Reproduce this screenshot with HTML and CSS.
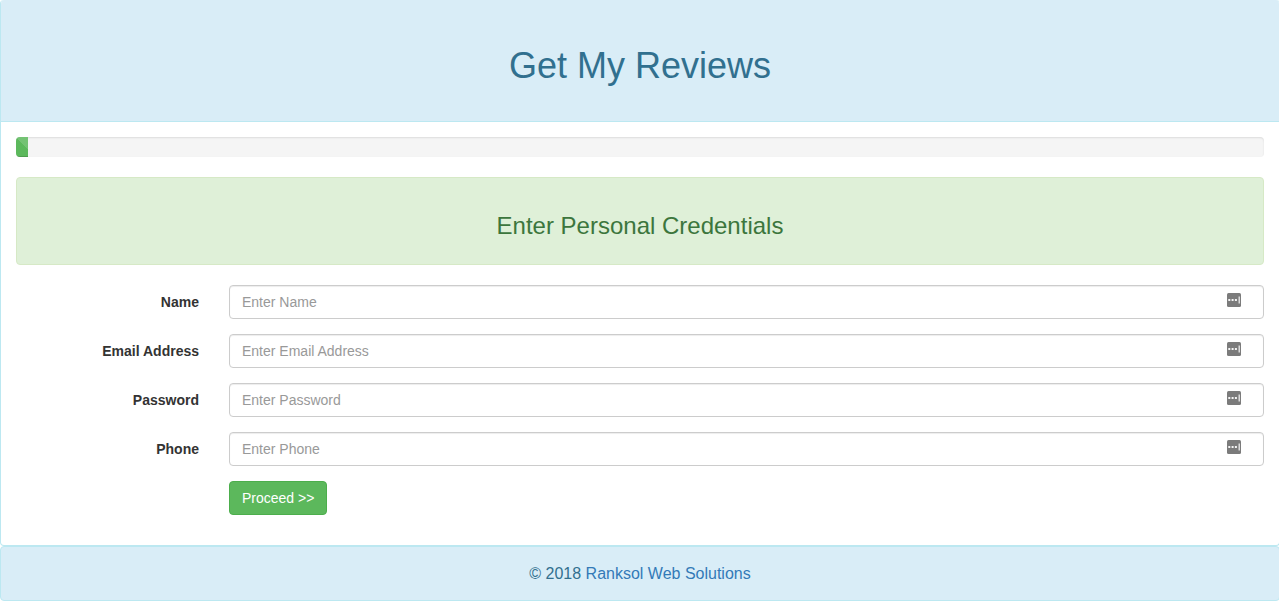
FILE: index.html
```html
<!DOCTYPE html>
<html lang="en">
<head>
<meta charset="utf-8">
<title>Get My Reviews</title>
<link rel="stylesheet" href="styles.css">
</head>
<body>
<svg class="defs" aria-hidden="true">
  <symbol id="key" viewBox="0 0 14 14">
    <rect width="14" height="14" rx="1.5" fill="#7b7b7b"/>
    <path d="M1.3 6h2v2h-2zM4.6 6h2v2h-2zM7.9 6h2v2h-2zM11.6 3.6h1.2v6.8h-1.2z" fill="#f4f4f4"/>
  </symbol>
</svg>
<div class="page">
<main class="panel">
  <header class="panel-heading"><h1>Get My Reviews</h1></header>
  <div class="panel-body">
    <div class="progress"><div class="progress-bar" style="width:1%"></div></div>
    <div class="alert"><h2>Enter Personal Credentials</h2></div>
    <form class="form">
      <label for="name">Name</label>
      <div class="field"><input id="name" type="text" placeholder="Enter Name"><svg class="key"><use href="#key"/></svg></div>
      <label for="email">Email Address</label>
      <div class="field"><input id="email" type="email" placeholder="Enter Email Address"><svg class="key"><use href="#key"/></svg></div>
      <label for="password">Password</label>
      <div class="field"><input id="password" type="password" placeholder="Enter Password"><svg class="key"><use href="#key"/></svg></div>
      <label for="phone">Phone</label>
      <div class="field"><input id="phone" type="tel" placeholder="Enter Phone"><svg class="key"><use href="#key"/></svg></div>
      <button class="btn" type="button">Proceed &gt;&gt;</button>
    </form>
  </div>
</main>
<footer class="footer">© 2018 <a href="#">Ranksol Web Solutions</a></footer>
</div>
</body>
</html>
```
FILE: styles.css
```css
* { box-sizing: border-box; }
body {
  margin: 0;
  overflow-x: hidden;
  background: #fff;
  color: #333;
  font: 14px/20px "Liberation Sans", Arial, sans-serif;
}
.defs { position: absolute; width: 0; height: 0; }
.page { margin-right: -1px; }
.panel {
  overflow: hidden;
  border: 1px solid #bce8f1;
  border-top: 0;
  border-radius: 4px;
}
.panel-heading {
  padding: 46px 15px 35px;
  border-bottom: 1px solid #bce8f1;
  background: #d9edf7;
  color: #31708f;
  text-align: center;
}
h1, h2 { margin: 0; font-weight: 500; }
h1 { font-size: 36px; line-height: 40px; }
h2 { font-size: 24px; line-height: 26px; }
.panel-body { padding: 15px 15px 30px; }
.progress {
  height: 20px;
  margin-bottom: 20px;
  overflow: hidden;
  border-radius: 4px;
  background: #f5f5f5;
  box-shadow: inset 0 1px 2px rgba(0, 0, 0, .1);
}
.progress-bar {
  height: 100%;
  background: #5cb85c linear-gradient(45deg, rgba(255,255,255,.15) 25%, transparent 25%, transparent 50%, rgba(255,255,255,.15) 50%, rgba(255,255,255,.15) 75%, transparent 75%) 0 0 / 40px 40px;
  box-shadow: inset 0 -1px 0 rgba(0, 0, 0, .15);
}
.alert {
  margin-bottom: 20px;
  padding: 35px 15px 25px;
  border: 1px solid #d6e9c6;
  border-radius: 4px;
  background: #dff0d8;
  color: #3c763d;
  text-align: center;
}
.form {
  display: grid;
  grid-template-columns: 1fr 5fr;
  row-gap: 15px;
  align-items: center;
  margin: 0 -15px;
}
label { padding: 0 15px; font-weight: 700; text-align: right; }
.field { position: relative; margin: 0 15px; }
input {
  display: block;
  width: 100%;
  height: 34px;
  padding: 6px 12px;
  border: 1px solid #ccc;
  border-radius: 4px;
  background: #fff;
  color: #555;
  font: inherit;
  box-shadow: inset 0 1px 1px rgba(0, 0, 0, .075);
}
input::placeholder { color: #999; opacity: 1; }
.key { position: absolute; top: 8px; right: 23px; width: 14px; height: 14px; }
.btn {
  grid-column: 2;
  justify-self: start;
  margin-left: 15px;
  padding: 6px 12px;
  border: 1px solid #4cae4c;
  border-radius: 4px;
  background: #5cb85c;
  color: #fff;
  font: inherit;
}
.footer {
  padding: 17px 15px 16px;
  border: 1px solid #bce8f1;
  border-radius: 4px;
  background: #d9edf7;
  color: #31708f;
  font-size: 16px;
  text-align: center;
}
a { color: #337ab7; text-decoration: none; }
```
